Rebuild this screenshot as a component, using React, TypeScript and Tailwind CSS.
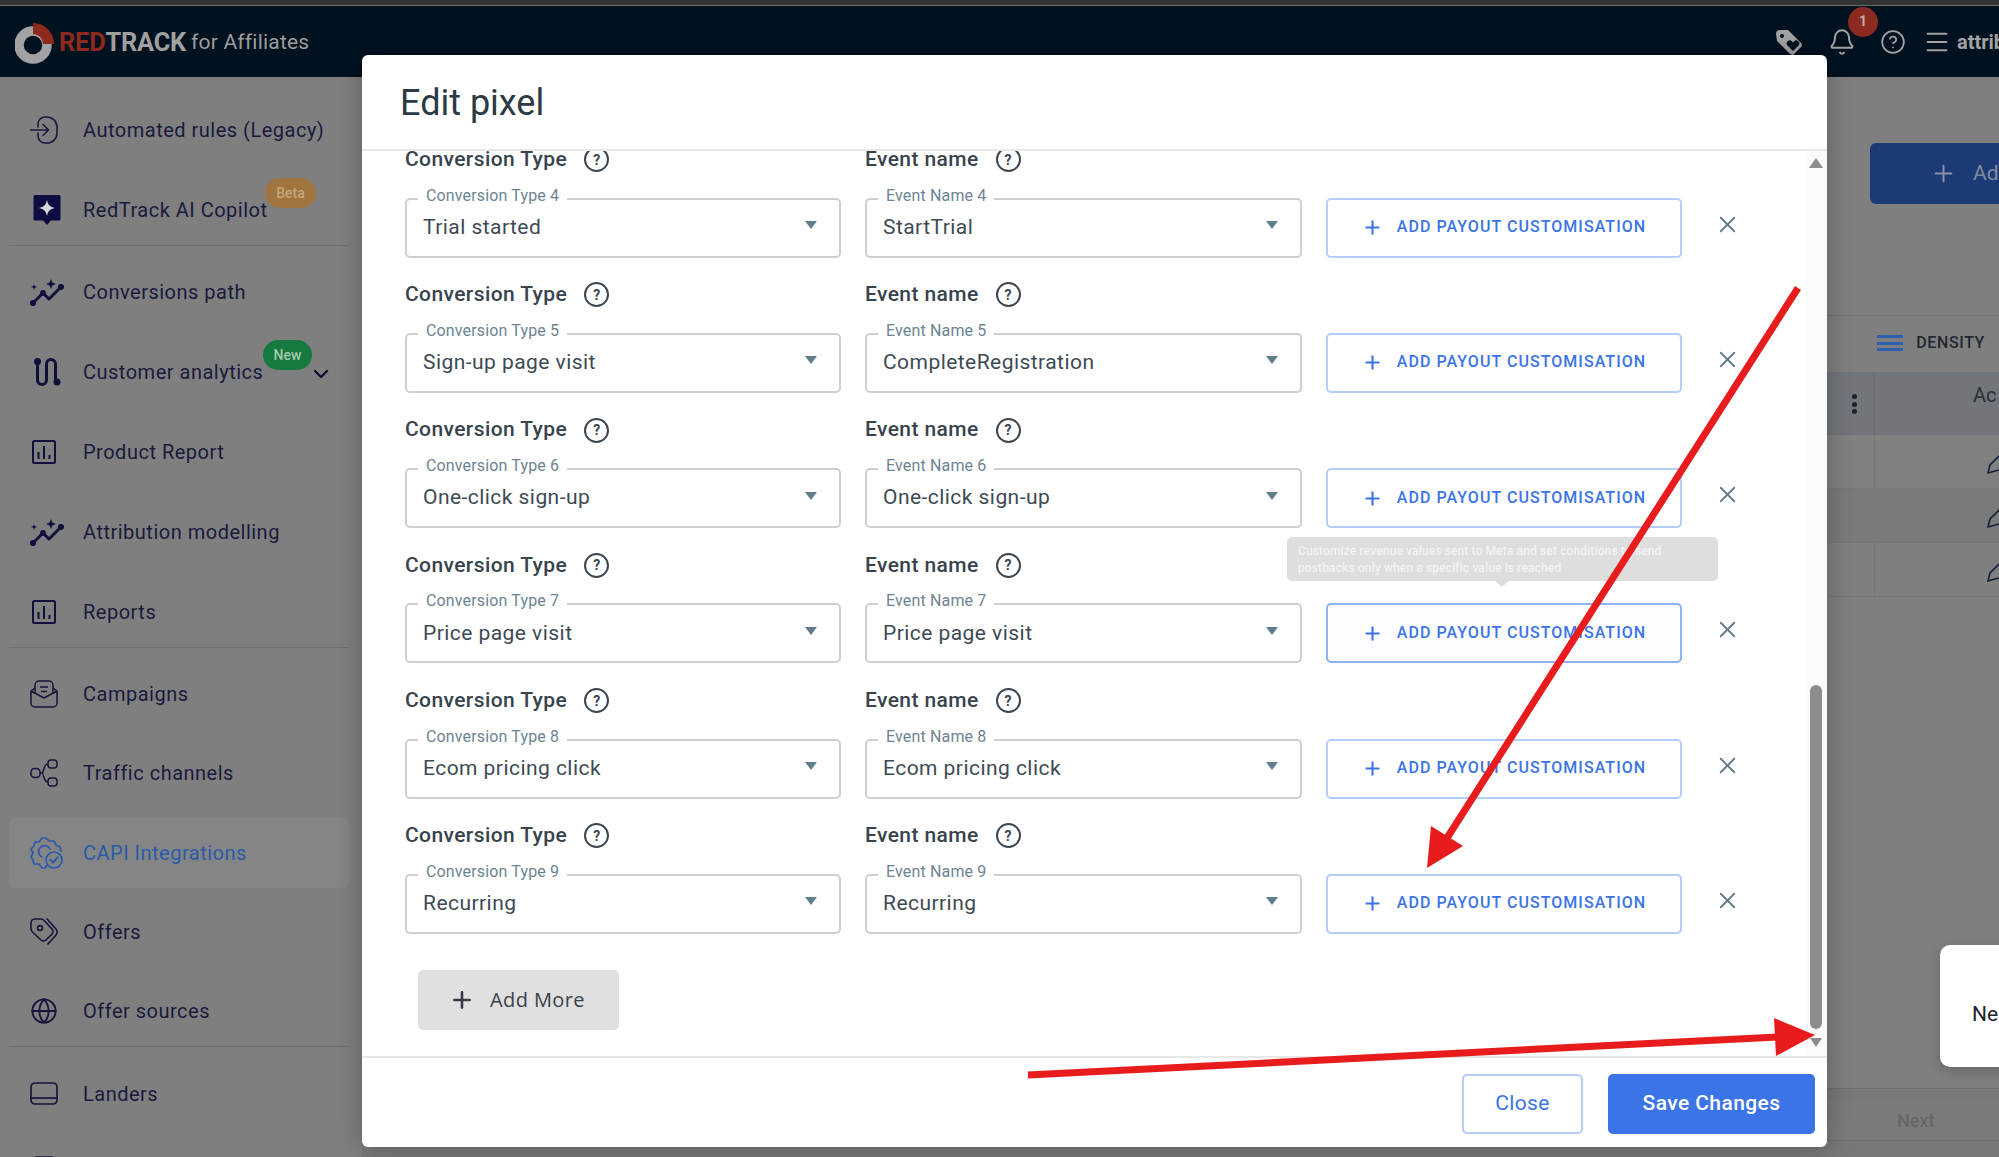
import { Globe, Plus, X, Bell, CircleHelp, ChevronDown, Menu } from 'lucide-react';
import type { ReactNode } from 'react';

const stroke = '#1a1a3d';

const IconRules = () => (
    <svg width="28" height="28" viewBox="0 0 28 28" fill="none" stroke={stroke} strokeWidth="1.6" strokeLinecap="round">
        <path d="M8 8 V11 M8 17 V20 A7 7 0 0 0 15 27 H17 A10 10 0 0 0 27 17 V11 A10 10 0 0 0 17 1 H15 A7 7 0 0 0 8 8" />
        <path d="M0.5 14 H18 M13 8.5 L18.5 14 L13 19.5" />
    </svg>
);
const IconCopilot = () => (
    <svg width="28" height="32" viewBox="0 0 28 32" fill="none" className="ml-[3px]">
        <path d="M2 1 H26 A1.5 1.5 0 0 1 27.5 2.5 V25 A1.5 1.5 0 0 1 26 26.5 H18 L14 31 L10 26.5 H2 A1.5 1.5 0 0 1 0.5 25 V2.5 A1.5 1.5 0 0 1 2 1 Z" fill="#0c0c40" />
        <path d="M14 6 C15 11 17 13 22 14 C17 15 15 17 14 22 C13 17 11 15 6 14 C11 13 13 11 14 6 Z" fill="#d8d8d8" />
    </svg>
);
const IconSpark = () => (
    <svg width="34" height="28" viewBox="0 0 34 28" fill="none" stroke="#10103a" strokeWidth="3" strokeLinecap="round" strokeLinejoin="round">
        <path d="M3 25 L13 15 L19 21 L31 9" />
        <circle cx="3" cy="25" r="1.6" fill="#10103a" />
        <circle cx="13" cy="15" r="1.4" fill="#10103a" />
        <circle cx="31" cy="9" r="1.6" fill="#10103a" />
        <path d="M21 1 L22.4 4.6 L26 6 L22.4 7.4 L21 11 L19.6 7.4 L16 6 L19.6 4.6 Z" fill="#10103a" stroke="none" />
        <path d="M4 6 L4.8 8.2 L7 9 L4.8 9.8 L4 12 L3.2 9.8 L1 9 L3.2 8.2 Z" fill="#10103a" stroke="none" />
    </svg>
);
const IconCustomer = () => (
    <svg width="28" height="30" viewBox="0 0 28 30" fill="none" stroke="#10103a" strokeWidth="3" strokeLinecap="round" className="ml-[3px]">
        <circle cx="4.5" cy="4.5" r="3.5" fill="#10103a" stroke="none" />
        <circle cx="24" cy="25" r="3.5" fill="#10103a" stroke="none" />
        <path d="M4.5 5 V23 A4.5 4.5 0 0 0 13.5 23 V7 A4.5 4.5 0 0 1 22.5 7 V25" />
    </svg>
);
const IconReport = () => (
    <svg width="24" height="24" viewBox="0 0 24 24" fill="none" stroke="#10103a" strokeWidth="2" className="ml-[2px]">
        <rect x="1" y="1" width="22" height="22" rx="1.5" />
        <path d="M6.5 12 V19 M12 6 V19 M17.5 15 V19" />
    </svg>
);
const IconCampaign = () => (
    <svg width="28" height="28" viewBox="0 0 28 28" fill="none" stroke="#16163c" strokeWidth="1.5" strokeLinejoin="round">
        <path d="M1 11 V23 A4 4 0 0 0 5 27 H23 A4 4 0 0 0 27 23 V11 L14 18 Z" />
        <path d="M5 13 V5 A4 4 0 0 1 9 1 H19 A4 4 0 0 1 23 5 V13" />
        <path d="M1 11 L5 8 M27 11 L23 8 M10 7 H18 M11 11.5 H17" />
    </svg>
);
const IconTraffic = () => (
    <svg width="28" height="28" viewBox="0 0 28 28" fill="none" stroke="#16163c" strokeWidth="1.5">
        <rect x="1" y="9.5" width="9" height="9" rx="3.5" />
        <rect x="18" y="1" width="9" height="8" rx="3" />
        <rect x="18" y="19" width="9" height="8" rx="3" />
        <path d="M10 14 H12 C14 14 13 5 18 5 M12 14 C14 14 13 23 18 23" />
    </svg>
);
const IconCapi = () => (
    <svg width="34" height="34" viewBox="0 0 34 34" fill="none" stroke="#2a5bab" strokeWidth="1.7" strokeLinecap="round" strokeLinejoin="round">
        <path d="M17 29 L15 32 H12 L9 28 L4 28 L3 24 L1 21 L3 17 L1 13 L4 10 L5 6 L9 6 L12 2 H16 L19 5 L24 5 L26 9 L30 11 L31 15" />
        <path d="M20 13 A6 6 0 1 0 12 21" />
        <circle cx="24" cy="24" r="8" />
        <path d="M20.5 24 L23 26.5 L27.5 21.5" strokeWidth="2.2" />
    </svg>
);
const IconOffer = () => (
    <svg width="28" height="28" viewBox="0 0 28 28" fill="none" stroke="#16163c" strokeWidth="1.6" strokeLinejoin="round">
        <path d="M1 5 A4 4 0 0 1 5 1 H11 A4 4 0 0 1 14 2.5 L22 11 A4 4 0 0 1 22 16 L16 22 A4 4 0 0 1 11 22 L2.5 14 A4 4 0 0 1 1 11 Z" />
        <circle cx="10" cy="10" r="2.4" />
        <path d="M17 1 L26 11 A5 5 0 0 1 26 17 L18 26" strokeLinecap="round" />
    </svg>
);
const IconLander = () => (
    <svg width="28" height="24" viewBox="0 0 28 24" fill="none" stroke="#16163c" strokeWidth="1.7">
        <rect x="1" y="1" width="26" height="21" rx="4" />
        <path d="M1 16 H27" />
    </svg>
);
const IconDb = () => (
    <svg width="28" height="28" viewBox="0 0 28 28" fill="none" stroke="#16163c" strokeWidth="1.7">
        <rect x="1" y="1" width="26" height="26" rx="6" />
    </svg>
);

type NavItem = { label: string; icon: ReactNode; active?: boolean; badge?: 'beta' | 'new'; chevron?: boolean };

const groups: NavItem[][] = [
    [
        { label: 'Automated rules (Legacy)', icon: <IconRules /> },
        { label: 'RedTrack AI Copilot', icon: <IconCopilot />, badge: 'beta' },
    ],
    [
        { label: 'Conversions path', icon: <IconSpark /> },
        { label: 'Customer analytics', icon: <IconCustomer />, badge: 'new', chevron: true },
        { label: 'Product Report', icon: <IconReport /> },
        { label: 'Attribution modelling', icon: <IconSpark /> },
        { label: 'Reports', icon: <IconReport /> },
    ],
    [
        { label: 'Campaigns', icon: <IconCampaign /> },
        { label: 'Traffic channels', icon: <IconTraffic /> },
        { label: 'CAPI Integrations', icon: <IconCapi />, active: true },
        { label: 'Offers', icon: <IconOffer /> },
        { label: 'Offer sources', icon: <Globe size={28} strokeWidth={1.6} color="#16163c" /> },
    ],
];

const rows = [
    { n: 4, type: 'Trial started', event: 'StartTrial' },
    { n: 5, type: 'Sign-up page visit', event: 'CompleteRegistration' },
    { n: 6, type: 'One-click sign-up', event: 'One-click sign-up' },
    { n: 7, type: 'Price page visit', event: 'Price page visit', focus: true },
    { n: 8, type: 'Ecom pricing click', event: 'Ecom pricing click' },
    { n: 9, type: 'Recurring', event: 'Recurring' },
];

const HelpIcon = () => (
    <span className="flex h-[25px] w-[25px] items-center justify-center rounded-full border-2 border-[#3a4650] text-[14px] font-bold leading-none text-[#3a4650]">
        ?
    </span>
);

const FieldLabel = ({ text }: { text: string }) => (
    <div className="flex h-[50px] items-center">
        <span className="text-[21px] font-medium tracking-[0.4px] text-[#37434d]">{text}</span>
        <span className="ml-[17px]"><HelpIcon /></span>
    </div>
);

const SelectField = ({ label, value, width }: { label: string; value: string; width: string }) => (
    <div className={`relative flex h-[60px] items-center justify-between rounded-[5px] border-2 border-[#cfcfcf] pl-[16px] pr-[22px] ${width}`}>
        <span className="absolute left-[11px] top-[-14px] bg-white px-[8px] text-[16px] leading-[20px] tracking-[0.15px] text-[#6c8492]">{label}</span>
        <span className="text-[21px] tracking-[0.45px] text-[#3d4a54]">{value}</span>
        <span className="mb-[5px] h-0 w-0 border-x-[6px] border-t-[8px] border-x-transparent border-t-[#607d8b]" />
    </div>
);

const App = () => {
    return (
        <div className="relative h-[1157px] w-[1999px] overflow-hidden bg-[#7f7f7f] font-['Roboto',sans-serif]">
            <div className="h-[5px] bg-[#333333]" />
            <div className="h-px bg-[#6b6b6b]" />
            <header className="flex h-[71px] items-center justify-between bg-[#00111f] pl-[15px]">
                <div className="flex items-center">
                    <svg width="40" height="42" viewBox="0 0 40 42" className="mt-[3px]">
                        <circle cx="18" cy="23" r="14" fill="none" stroke="#a3a3a3" strokeWidth="9.5" />
                        <path d="M18 1 A21 21 0 0 1 39 22 H28 A10 10 0 0 0 18 12 Z" fill="#8e2a1d" />
                    </svg>
                    <span className="ml-[4px] mt-[2px] text-[25.4px] font-bold tracking-[-0.2px] text-[#8e2a1d]">RED</span>
                    <span className="mt-[2px] text-[25.4px] font-bold tracking-[-0.2px] text-[#a0a0a0]">TRACK</span>
                    <span className="ml-[5px] mt-[2px] text-[21px] tracking-[0.2px] text-[#9c9c9c]">for Affiliates</span>
                </div>
                <div className="relative flex items-center">
                    <svg width="28" height="28" viewBox="0 0 28 28" className="mr-[25px]">
                        <path d="M1 6 A4 4 0 0 1 5 2 H13 L26 15 A3 3 0 0 1 26 19 L18 27 L15 26 L2 13 Z" fill="#a3a3a3" />
                        <circle cx="7" cy="8" r="2" fill="#00111f" />
                        <path d="M18 23 L12.5 17.5 A3 3 0 0 1 17 13.5 L18 14.5 L19 13.5 A3 3 0 0 1 23.5 17.5 Z" fill="#00111f" />
                    </svg>
                    <Bell size={28} strokeWidth={1.7} color="#a3a3a3" className="mr-[24px]" />
                    <span className="absolute left-[73px] top-[-20px] flex h-[30px] w-[30px] items-center justify-center rounded-full bg-[#8b2a20] text-[14px] font-bold text-[#c8a9a4]">1</span>
                    <CircleHelp size={26} strokeWidth={1.6} color="#a3a3a3" className="mr-[17px]" />
                    <Menu size={28} strokeWidth={1.7} color="#a3a3a3" className="mr-[6px]" />
                    <span className="w-[42px] whitespace-nowrap text-[20px] font-bold text-[#a3a3a3]">attrib</span>
                </div>
            </header>

            <div className="flex h-[1080px]">
                <aside className="flex w-[362px] shrink-0 flex-col pl-[9px] pt-[18px]">
                    {groups.map((group, i) => (
                        <div key={i} className={`mb-[11px] flex w-[340px] shrink-0 flex-col border-b border-[#6e6e6e] ${i === 2 ? 'gap-[9.3px]' : 'gap-[10px]'}`}>
                            {group.map((item) => (
                                <div key={item.label} className={`relative flex h-[70px] shrink-0 items-center pl-[21px] ${item.active ? 'rounded-md bg-[#858585]' : ''}`}>
                                    <span className="flex w-[53px] shrink-0 items-center">{item.icon}</span>
                                    <span className={`text-[20px] tracking-[0.5px] ${item.active ? 'text-[#2a5bab]' : 'text-[#1a1a3d]'}`}>{item.label}</span>
                                    {item.badge === 'beta' && (
                                        <span className="absolute left-[256px] top-[3px] flex h-[30px] w-[51px] items-center justify-center rounded-full bg-[#a0753f] text-[14px] font-medium text-[#c4a77a]">Beta</span>
                                    )}
                                    {item.badge === 'new' && (
                                        <span className="absolute left-[254px] top-[3px] flex h-[30px] w-[49px] items-center justify-center rounded-full bg-[#167a3e] text-[14px] font-medium text-[#a3c9ae]">New</span>
                                    )}
                                    {item.chevron && <ChevronDown size={24} strokeWidth={2.4} color="#10103a" className="absolute left-[300px] top-[25px]" />}
                                </div>
                            ))}
                        </div>
                    ))}
                    <div className="mt-[1px] flex h-[70px] w-[340px] shrink-0 items-center pl-[21px]"><IconLander /><span className="ml-[25px] text-[20px] tracking-[0.5px] text-[#1a1a3d]">Landers</span></div>
                    <div className="mt-[27px] flex shrink-0 pl-[21px]"><IconDb /></div>
                </aside>

                <main className="flex min-w-0 flex-1 flex-col">
                    <div className="flex h-[239px] justify-end border-b border-[#737373] pt-[66px]">
                        <div className="flex h-[61px] w-[129px] items-center rounded-l-md bg-[#1c3a75] pl-[60px]">
                            <Plus size={27} strokeWidth={1.7} color="#8a94a8" className="mr-[16px] shrink-0" />
                            <span className="whitespace-nowrap text-[21px] text-[#808ba2]">Ad</span>
                        </div>
                    </div>
                    <div className="flex h-[56px] items-center justify-end gap-[13px] pb-[2px] pr-[14px]">
                        <div className="flex h-[16px] w-[26px] flex-col justify-between">
                            <span className="h-[3px] bg-[#2f5fb3]" />
                            <span className="h-[3px] bg-[#2f5fb3]" />
                            <span className="h-[3px] bg-[#2f5fb3]" />
                        </div>
                        <span className="text-[16px] font-medium tracking-[0.6px] text-[#23272f]">DENSITY</span>
                    </div>
                    <div className="flex h-[63px] border-b border-[#727272] bg-[#72757a]">
                        <div className="flex w-[1513px] shrink-0 justify-end border-r-2 border-[#6e7072] pr-[16px] pt-[22px]">
                            <span className="flex flex-col gap-[2.5px]">
                                <span className="h-[5px] w-[5px] rounded-full bg-[#1c2233]" />
                                <span className="h-[5px] w-[5px] rounded-full bg-[#1c2233]" />
                                <span className="h-[5px] w-[5px] rounded-full bg-[#1c2233]" />
                            </span>
                        </div>
                        <span className="ml-auto w-[26px] whitespace-nowrap pt-[8px] text-[20px] text-[#2b2f36]">Ac</span>
                    </div>
                    {['bg-[#808080]', 'bg-[#7a7a7a]', 'bg-[#7f7f7f]'].map((bg) => (
                        <div key={bg} className={`flex h-[54px] items-center overflow-hidden border-b border-[#777777] ${bg}`}>
                            <div className="h-full w-[1513px] shrink-0 border-r border-[#777777]" />
                            <svg width="12" height="20" viewBox="0 0 12 20" className="ml-auto mt-[6px]" fill="none" stroke="#14203a" strokeWidth="1.6">
                                <path d="M12 1 L3 10 L1 18 L12 15" />
                            </svg>
                        </div>
                    ))}
                    <div className="flex-1" />
                    <div className="h-[12px] border-t border-[#6e6e6e] bg-[#787878]" />
                    <div className="flex h-[40px] items-center bg-[#7b7b7b] pl-[1535px]">
                        <span className="text-[18px] font-medium text-[#666666]">Next</span>
                    </div>
                    <div className="h-[17px] border-t border-[#6e6e6e] bg-[#787878]" />
                </main>
            </div>

            <div className="absolute left-[1940px] top-[945px] flex h-[122px] w-[80px] items-center rounded-[10px] bg-white pl-[32px] pt-[18px] text-[21px] text-[#1f2329] shadow-[0_4px_14px_rgba(0,0,0,0.2)]">
                Ne
            </div>

            <div className="absolute left-[362px] top-[55px] flex h-[1092px] w-[1465px] flex-col rounded-[6px] bg-white shadow-[0_0_26px_rgba(0,0,0,0.28)]">
                <div className="flex h-[96px] shrink-0 items-center border-b-2 border-[#e8e8e8] pl-[38px] pt-[2px]">
                    <span className="text-[36px] text-[#2c3a45]">Edit pixel</span>
                </div>

                <div className="flex min-h-0 flex-1">
                    <div className="min-w-0 flex-1 overflow-hidden pl-[43px]">
                        <div className="-mt-[16.4px]">
                            {rows.map((row) => (
                                <div key={row.n} className="flex h-[135.25px] flex-col">
                                    <div className="flex">
                                        <div className="w-[460px]"><FieldLabel text="Conversion Type" /></div>
                                        <FieldLabel text="Event name" />
                                    </div>
                                    <div className="mt-[13px] flex items-center">
                                        <SelectField label={`Conversion Type ${row.n}`} value={row.type} width="w-[436px]" />
                                        <div className="w-[24px]" />
                                        <SelectField label={`Event Name ${row.n}`} value={row.event} width="w-[437px]" />
                                        <div className={`ml-[24px] flex h-[60px] w-[356px] items-center justify-center rounded-[5px] border-2 ${row.focus ? 'border-[#8fb3f2] bg-[#fdfdff]' : 'border-[#b4cdf6]'}`}>
                                            <Plus size={21} strokeWidth={2.4} color="#3b74e6" className="mr-[14px]" />
                                            <span className="pb-[1px] text-[16px] font-medium tracking-[1.05px] text-[#3b74e6]">ADD PAYOUT CUSTOMISATION</span>
                                        </div>
                                        <X size={27} strokeWidth={1.6} color="#5f7a86" className="mb-[7px] ml-[32px]" />
                                    </div>
                                </div>
                            ))}
                            <div className="ml-[13px] mt-[24px] flex h-[60px] w-[201px] items-center rounded-[5px] bg-[#e0e0e0] pl-[31px]">
                                <Plus size={26} strokeWidth={2.4} color="#333b44" />
                                <span className="ml-[15px] font-['Open_Sans',sans-serif] text-[20px] tracking-[0.4px] text-[#3a4048]">Add More</span>
                            </div>
                        </div>
                    </div>
                    <div className="flex w-[22px] shrink-0 flex-col items-center bg-[#fafafa] pr-[1px]">
                        <span className="mt-[7px] h-0 w-0 border-x-[7px] border-b-[10px] border-x-transparent border-b-[#8c8c8c]" />
                        <span className="mt-[517px] h-[344px] w-[12px] rounded-full bg-[#8c8c8c]" />
                        <span className="mt-[9px] h-0 w-0 border-x-[6px] border-t-[9px] border-x-transparent border-t-[#8c8c8c]" />
                    </div>
                </div>

                <div className="flex h-[91px] shrink-0 items-center justify-end gap-[25px] border-t-2 border-[#e8e8e8] pr-[12px] pt-[3px]">
                    <span className="flex h-[60px] w-[121px] items-center justify-center rounded-[5px] border-2 border-[#b4cdf6] text-[21px] tracking-[0.4px] text-[#3b74e6]">Close</span>
                    <span className="flex h-[60px] w-[207px] items-center justify-center rounded-[5px] bg-[#3b74e6] text-[21px] font-medium tracking-[0.4px] text-white">Save Changes</span>
                </div>
            </div>

            <div className="absolute left-[1287px] top-[537px] h-[44px] w-[431px] rounded-[5px] bg-[#dedede] px-[11px] pt-[6px] text-[12px] font-medium leading-[17px] tracking-[0.13px] text-[#f3f3f3]">
                Customize revenue values sent to Meta and set conditions to send postbacks only when a specific value is reached
                <span className="absolute left-[208px] top-[44px] h-0 w-0 border-x-[7px] border-t-[6px] border-x-transparent border-t-[#dedede]" />
            </div>

            <svg className="pointer-events-none absolute left-0 top-0" width="1999" height="1157" viewBox="0 0 1999 1157" fill="none">
                <path d="M1798 288 L1447 838" stroke="#e81c1c" strokeWidth="7" />
                <path d="M1427 868 L1431 826 L1463 846 Z" fill="#e81c1c" />
                <path d="M1028 1075 L1778 1037" stroke="#e81c1c" strokeWidth="7" />
                <path d="M1815 1035 L1774 1018 L1776 1056 Z" fill="#e81c1c" />
            </svg>
        </div>
    );
};

export default App;
